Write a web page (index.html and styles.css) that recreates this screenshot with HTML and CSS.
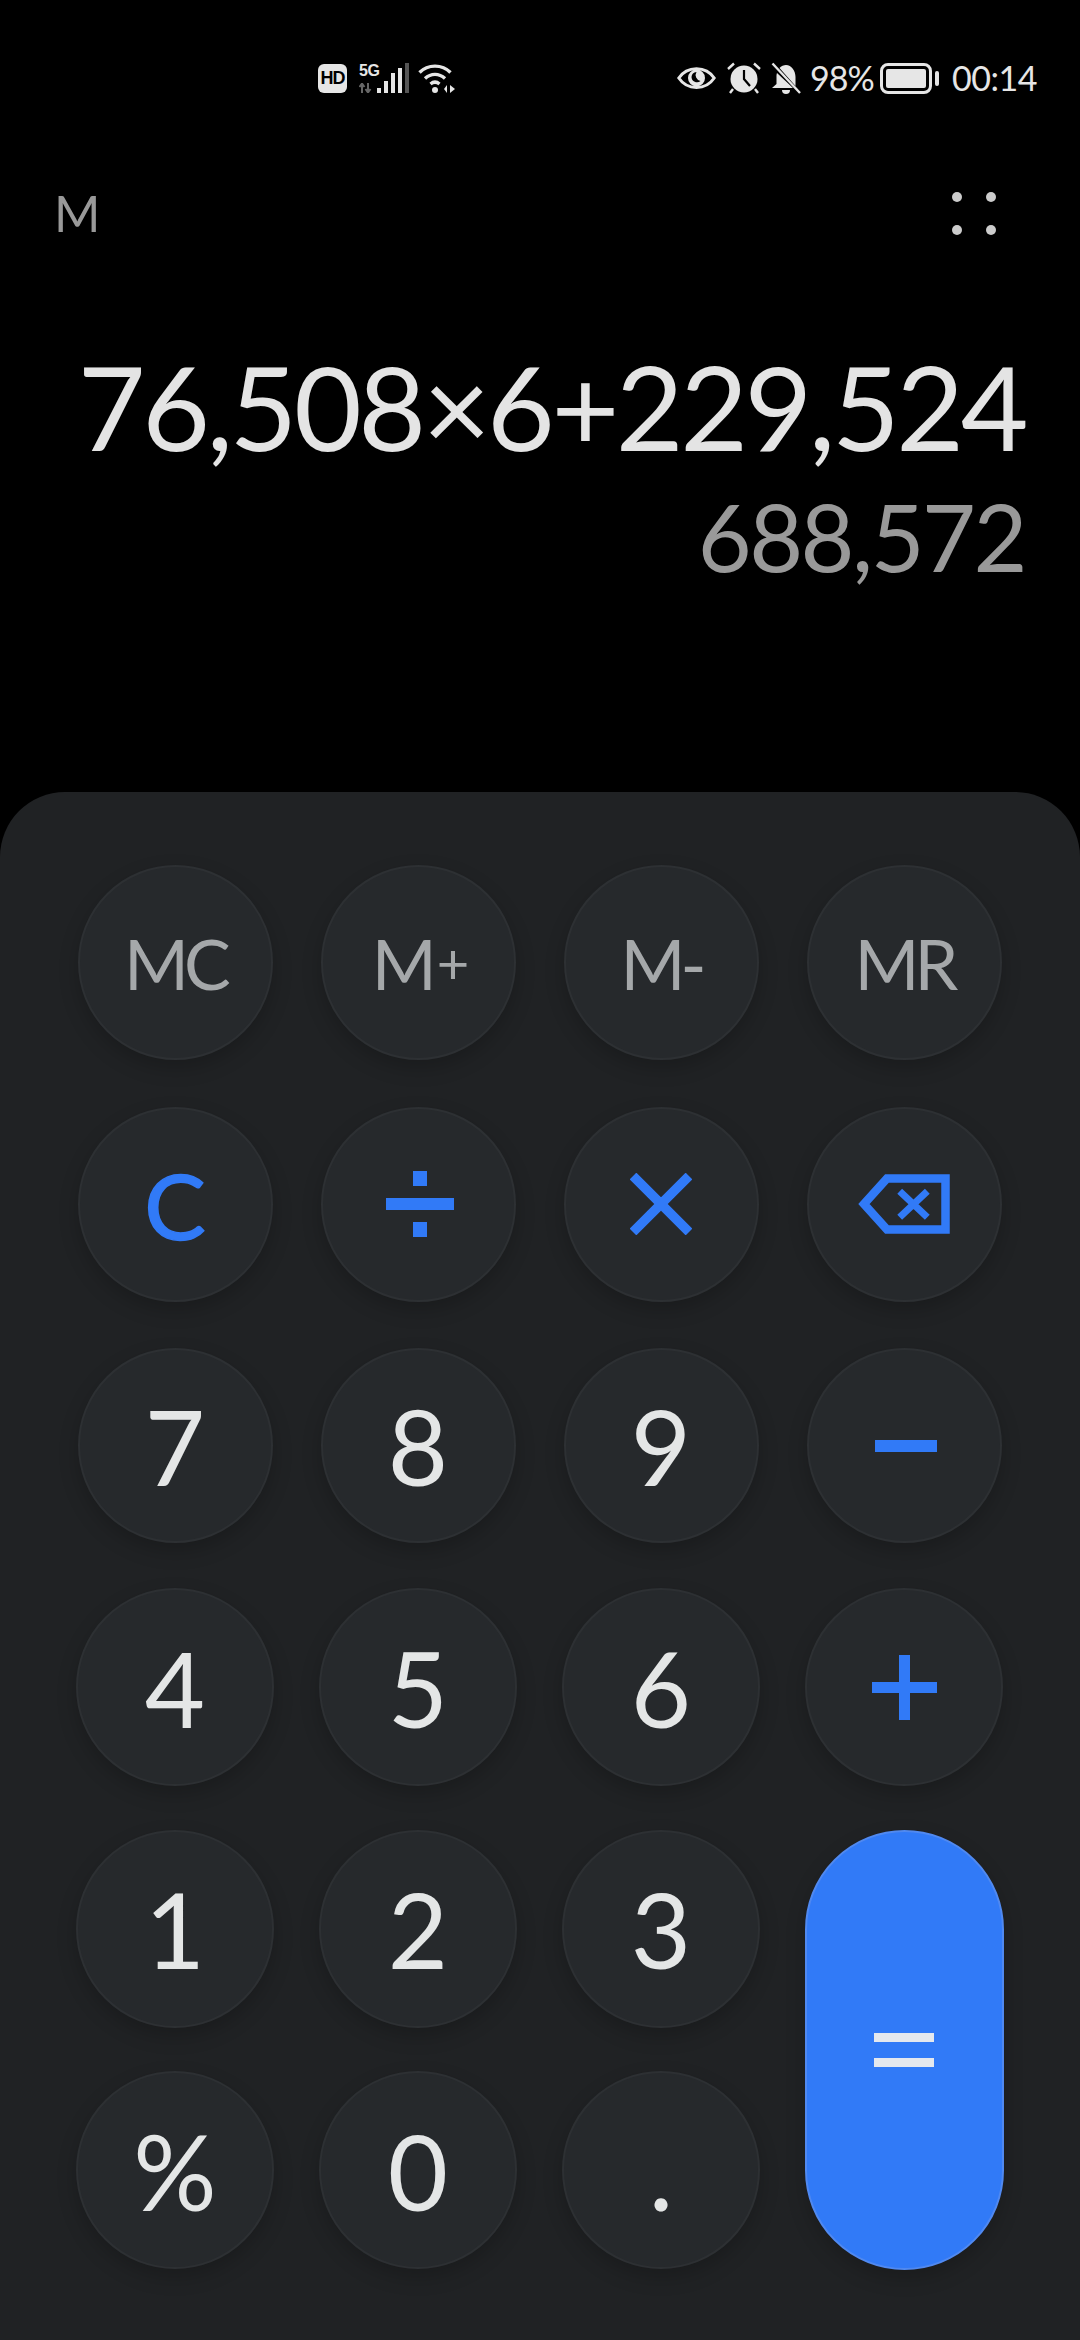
FILE: index.html
```html
<!DOCTYPE html>
<html lang="zh-CN">
<head>
    <meta charset="UTF-8">
    <title>计算器</title>
    <link rel="stylesheet" href="styles.css">
</head>
<body>
    <div class="statusbar">
        <div class="status-mid">
            <span class="hd">HD</span>
            <div class="net">
                <span class="five-g">5G</span>
                <svg class="updown" width="13" height="10" viewBox="0 0 13 10"><path d="M3 0v10M0.5 4L3 0.5 5.500 4M9 0v10M6.500 6L9 9.500 11.500 6" stroke="#666" stroke-width="2" fill="none"/></svg>
            </div>
            <div class="signal">
                <i class="s1"></i><i class="s2"></i><i class="s3"></i><i class="s4"></i><i class="s5"></i>
            </div>
            <svg class="wifi" width="38" height="32" viewBox="0 0 38 32">
                <path d="M1.500 10.500C10 2 24 2 32.500 10.500M7 16.500C13 11 21 11 27 16.500M12.500 22C15.500 19.500 18.500 19.500 21.500 22" stroke="#e6e6e6" stroke-width="3.400" fill="none"/>
                <circle cx="17" cy="28" r="3" fill="#e6e6e6"/>
                <path d="M26 27l3-4v8zM32 23l5 4-5 4z" fill="#e6e6e6"/>
            </svg>
        </div>
        <div class="status-right">
            <svg class="eye" width="39" height="24" viewBox="0 0 39 24">
                <path d="M1.800 12C10-0.500 29-0.500 37.200 12 29 24.500 10 24.500 1.800 12Z" stroke="#e6e6e6" stroke-width="3" fill="none"/>
                <circle cx="19.500" cy="12" r="8.500" fill="#e6e6e6"/>
                <path d="M14.500 11a5.500 5.500 0 0 1 5-5 6 6 0 0 0 4 9 5.500 5.500 0 0 1-9-4Z" fill="#000"/>
            </svg>
            <svg class="alarm" width="34" height="32" viewBox="0 0 34 32">
                <circle cx="17" cy="17" r="13.500" fill="#e6e6e6"/>
                <path d="M17 8v9l6 7" stroke="#000" stroke-width="2.200" fill="none"/>
                <path d="M1 7L7 1.500M33 7L27 1.500M6 27l-3 4M28 27l3 4" stroke="#e6e6e6" stroke-width="2.400" fill="none"/>
            </svg>
            <svg class="bell" width="30" height="32" viewBox="0 0 30 32">
                <path d="M15 3c-2 0-5 1-6.500 3l16 18V15c0-6-4-12-9.500-12ZM6 11c-.5 1-.5 3-.5 4v7L1 26h21Z" fill="#e6e6e6"/>
                <path d="M11 28h8a4 4 0 0 1-8 0Z" fill="#e6e6e6"/>
                <path d="M1.500 1.500L29 31" stroke="#e6e6e6" stroke-width="2.400"/>
            </svg>
            <span class="pct">98%</span>
            <div class="battery"><div class="battery-fill"></div></div>
            <div class="battery-nub"></div>
            <span class="clock">00:14</span>
        </div>
    </div>

    <div class="toprow">
        <span class="mem">M</span>
        <div class="dots"><i></i><i></i><i></i><i></i></div>
    </div>

    <div class="display">
        <div class="expr">76,508×6+229,524</div>
        <div class="result">688,572</div>
    </div>

    <div class="pad">
        <div class="key mem-key">MC</div>
        <div class="key mem-key">M<small>+</small></div>
        <div class="key mem-key">M-</div>
        <div class="key mem-key">MR</div>

        <div class="key c-key">C</div>
        <div class="key nudge" aria-label="÷">
            <svg width="68" height="66" viewBox="0 0 68 66"><rect y="27" width="68" height="12" fill="#317af7"/><rect x="27" width="14" height="15" fill="#317af7"/><rect x="27" y="51" width="14" height="15" fill="#317af7"/></svg>
        </div>
        <div class="key" aria-label="×">
            <svg width="62" height="62" viewBox="0 0 62 62"><path d="M3 3L59 59M59 3L3 59" stroke="#317af7" stroke-width="9.500" fill="none"/></svg>
        </div>
        <div class="key" aria-label="退格">
            <svg width="92" height="60" viewBox="0 0 92 60"><path d="M87.500 4.500H29L6 30 29 55.500H87.500Z" stroke="#317af7" stroke-width="8.500" fill="none"/><path d="M41.700 17.200L69.300 43.300M69.300 17.200L41.700 43.300" stroke="#317af7" stroke-width="7" fill="none"/></svg>
        </div>

        <div class="key num-key">7</div>
        <div class="key num-key">8</div>
        <div class="key num-key">9</div>
        <div class="key nudge" aria-label="−">
            <svg width="62" height="12" viewBox="0 0 62 12"><rect width="62" height="12" fill="#317af7"/></svg>
        </div>

        <div class="key big num-key">4</div>
        <div class="key big num-key">5</div>
        <div class="key big num-key">6</div>
        <div class="key big" aria-label="+">
            <svg width="65" height="65" viewBox="0 0 65 65"><rect y="27" width="65" height="11" fill="#317af7"/><rect x="27" width="11" height="65" fill="#317af7"/></svg>
        </div>

        <div class="key big num-key">1</div>
        <div class="key big num-key">2</div>
        <div class="key big num-key">3</div>
        <div class="key eq-key" aria-label="=">
            <svg width="60" height="34" viewBox="0 0 60 34"><rect width="60" height="9" fill="#e4e8ee"/><rect y="25" width="60" height="9" fill="#e4e8ee"/></svg>
        </div>

        <div class="key big num-key">%</div>
        <div class="key big num-key">0</div>
        <div class="key big num-key">.</div>
    </div>
</body>
</html>
```

FILE: styles.css
```css
/* 页面 */
body {
    margin: 0;
    width: 1080px;
    height: 2340px;
    overflow: hidden;
    background-color: #000;
    font-family: Lato, "Noto Sans CJK SC", sans-serif;
    color: #e6e6e6;
    display: flex;
    flex-direction: column;
}

/* 状态栏 */
.statusbar {
    height: 32px;
    padding: 62px 44px 0 318px;
    display: flex;
    justify-content: space-between;
    align-items: center;
}
.status-mid, .status-right {
    display: flex;
    align-items: center;
}
.hd {
    width: 29px;
    height: 29px;
    border-radius: 6px;
    background-color: #e6e6e6;
    color: #000;
    font-family: "Liberation Sans", sans-serif;
    font-size: 18px;
    font-weight: bold;
    letter-spacing: -1px;
    line-height: 29px;
    text-align: center;
}
.net {
    margin-left: 12px;
    width: 17px;
    height: 29px;
    display: flex;
    flex-direction: column;
    justify-content: space-between;
}
.five-g {
    font-family: "Liberation Sans", sans-serif;
    font-size: 16px;
    font-weight: bold;
    line-height: 13px;
    letter-spacing: -0.5px;
}
.signal {
    margin-left: 1px;
    height: 30px;
    display: flex;
    align-items: flex-end;
    gap: 3px;
}
.signal i {
    width: 4px;
    background-color: #e6e6e6;
}
.s1 { height: 5px; }
.s2 { height: 12px; }
.s3 { height: 20px; }
.s4 { height: 25px; }
.signal .s5 { height: 30px; background-color: #555; }
.wifi { margin-left: 9px; }
.eye { margin-right: 11px; }
.alarm { margin-right: 10px; }
.bell { margin-right: 9px; }
.pct {
    width: 63px;
    font-size: 34px;
    letter-spacing: -1px;
    margin-right: 7px;
    line-height: 32px;
    white-space: nowrap;
}
.battery {
    width: 52px;
    height: 31px;
    box-sizing: border-box;
    border: 3px solid #e6e6e6;
    border-radius: 8px;
    padding: 3px;
}
.battery-fill {
    height: 100%;
    background-color: #e6e6e6;
    border-radius: 2px;
}
.battery-nub {
    width: 4px;
    height: 15px;
    margin: 0 13px 0 3px;
    border-radius: 2px;
    background-color: #e6e6e6;
}
.clock {
    width: 84px;
    font-size: 34px;
    letter-spacing: -0.5px;
    line-height: 32px;
    white-space: nowrap;
}

/* 顶部 */
.toprow {
    margin-top: 89px;
    height: 60px;
    padding: 0 84px 0 54px;
    display: flex;
    justify-content: space-between;
    align-items: center;
}
.mem {
    font-size: 50px;
    color: #999;
}
.dots {
    width: 44px;
    display: grid;
    grid-template-columns: 10px 10px;
    justify-content: space-between;
    row-gap: 23px;
}
.dots i {
    width: 10px;
    height: 10px;
    border-radius: 50%;
    background-color: #ccc;
}

/* 显示区 */
.display {
    height: 549px;
    padding-right: 55px;
    display: flex;
    flex-direction: column;
    align-items: flex-end;
}
.expr {
    margin-top: 98px;
    font-size: 117px;
    letter-spacing: -3.500px;
    line-height: 130px;
    color: #e4e4e4;
}
.result {
    margin-top: 15px;
    font-size: 93px;
    letter-spacing: -2.500px;
    line-height: 100px;
    color: #999;
}

/* 键盘 */
.pad {
    flex: 1;
    box-sizing: border-box;
    padding: 73px 77.500px 0;
    background-color: #202224;
    border-radius: 65px 65px 0 0;
    display: grid;
    grid-template-columns: repeat(4, 195px);
    grid-auto-rows: 195px;
    column-gap: 48px;
    row-gap: 46.500px;
}
.key {
    box-sizing: border-box;
    border: 2px solid #2d3033;
    border-radius: 50%;
    background-color: #26292c;
    box-shadow: 0 8px 20px rgba(0, 0, 0, 0.2);
    display: flex;
    align-items: center;
    justify-content: center;
}
.big { margin: -1.500px; }
.nudge svg { margin-left: 3px; }
.mem-key {
    font-size: 70px;
    letter-spacing: -5px;
    color: #a5a8aa;
}
.mem-key small {
    font-size: 56px;
    margin-left: 5px;
}
.c-key {
    font-size: 92px;
    -webkit-text-stroke: 1.500px #317af7;
    color: #317af7;
}
.num-key {
    font-size: 104px;
    color: #e4e6e6;
}
.eq-key {
    grid-column: 4;
    grid-row: 5 / span 2;
    margin: -1px -2px -2px;
    border-radius: 100px;
    border-color: #5089f0;
    background-color: #317af7;
}
```
